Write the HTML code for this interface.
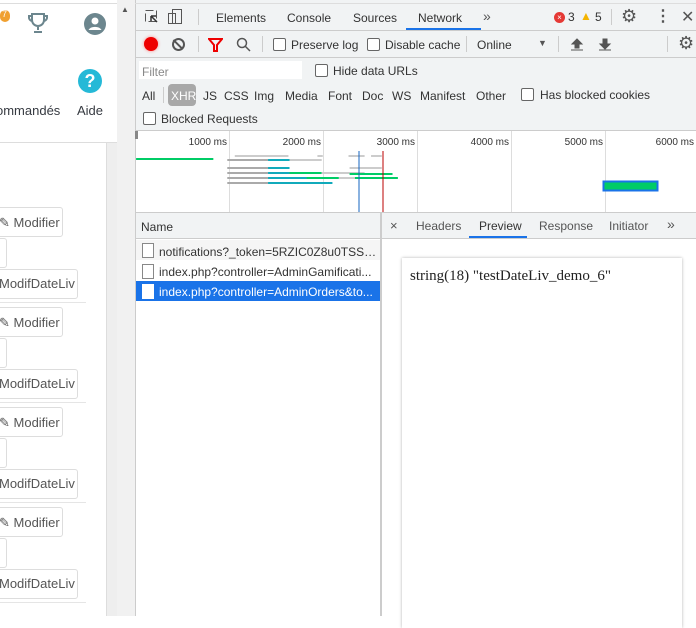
<!DOCTYPE html>
<html><head><style>
*{box-sizing:border-box;margin:0;padding:0}
body{width:696px;height:616px;overflow:hidden;position:relative;background:#fff;font-family:"Liberation Sans",sans-serif;font-size:12px;color:#333}
.a{position:absolute}
.t{position:absolute;white-space:nowrap}
.cb{position:absolute;width:13px;height:13px;border:1px solid #666;border-radius:2px;background:#fff}
.btn{position:absolute;border:1px solid #ddd;border-radius:3px;background:#fff;color:#555;font-size:13px}
.li{position:absolute;white-space:nowrap;overflow:hidden;text-overflow:ellipsis;width:218px}
</style></head><body>
<!-- left page -->
<div class="a" style="left:0;top:3px;width:117px;height:1px;background:#ddd"></div>
<div class="a" style="left:0;top:4px;width:117px;height:139px;background:#fff;border-bottom:1px solid #ddd"></div>
<div class="a" style="left:0;top:10px;width:10px;height:12px;border-radius:6px;background:#f0a030"></div>
<div class="t" style="left:2px;top:9px;font-size:9px;color:#fff">7</div>
<svg class="a" style="left:28px;top:12px" width="20" height="22" viewBox="0 0 20 22"><path d="M4 2h12v6a6 6 0 0 1-12 0z M4 4H1v2a4 4 0 0 0 3 3 M16 4h3v2a4 4 0 0 1-3 3 M10 14v4 M6 20h8" fill="none" stroke="#6c868e" stroke-width="2"/></svg>
<svg class="a" style="left:84px;top:13px" width="22" height="22" viewBox="0 0 22 22"><circle cx="11" cy="11" r="11" fill="#6c868e"/><circle cx="11" cy="8" r="3.5" fill="#fff"/><path d="M4.5 17a7 5 0 0 1 13 0" fill="#fff"/></svg>
<div class="a" style="left:78px;top:69px;width:24px;height:24px;border-radius:12px;background:#25b9d7;color:#fff;font-weight:bold;font-size:18px;text-align:center;line-height:24px">?</div>
<div class="t" style="left:-4px;top:103px;font-size:13px;color:#363a41">ommandés</div>
<div class="t" style="left:77px;top:103px;font-size:13px;color:#363a41">Aide</div>
<div class="a" style="left:106px;top:143px;width:1px;height:473px;background:#ddd"></div>
<div class="a" style="left:107px;top:143px;width:10px;height:473px;background:#eee"></div>
<div class="a" style="left:117px;top:0;width:18px;height:616px;background:#f1f1f1"></div>
<div class="t" style="left:121px;top:5px;font-size:8px;color:#555">▲</div>
<div id="rows"></div>
<!-- devtools -->
<div class="a" style="left:135px;top:0;width:561px;height:212px;background:#f1f3f4;border-left:1px solid #ccc"></div>
<div class="a" style="left:135px;top:3px;width:561px;height:1px;background:#ddd"></div>
<div class="a" style="left:135px;top:30px;width:561px;height:1px;background:#ccc"></div>
<div class="a" style="left:135px;top:57px;width:561px;height:1px;background:#ccc"></div>
<div class="a" style="left:135px;top:130px;width:561px;height:1px;background:#ccc"></div>
<svg class="a" style="left:144px;top:9px" width="40" height="17"><rect x="1.5" y="1.5" width="11" height="11" fill="none" stroke="#555" stroke-dasharray="8 3"/><path d="M7 7l6 6M7 7v5M7 7h5" stroke="#333" stroke-width="1.5"/><rect x="24.5" y="4.5" width="7" height="10" fill="none" stroke="#555"/><rect x="28.5" y="0.5" width="9" height="14" fill="none" stroke="#555"/></svg>
<div class="a" style="left:198px;top:9px;width:1px;height:16px;background:#ccc"></div>
<div class="t" style="left:216px;top:11px;color:#333">Elements</div>
<div class="t" style="left:287px;top:11px;color:#333">Console</div>
<div class="t" style="left:353px;top:11px;color:#333">Sources</div>
<div class="t" style="left:418px;top:11px;color:#333">Network</div>
<div class="a" style="left:406px;top:28px;width:75px;height:2px;background:#1a73e8"></div>
<div class="t" style="left:483px;top:8px;font-size:14px;color:#555">»</div>
<div class="a" style="left:554px;top:12px;width:11px;height:11px;border-radius:6px;background:#e53935;color:#fff;font-size:8px;text-align:center;line-height:11px">×</div>
<div class="t" style="left:568px;top:10px;color:#333">3</div>
<div class="t" style="left:580px;top:9px;color:#f4b400;font-size:12px">▲</div>
<div class="t" style="left:595px;top:10px;color:#333">5</div>
<div class="a" style="left:611px;top:9px;width:1px;height:16px;background:#ccc"></div>
<div class="t" style="left:621px;top:6px;font-size:18px;color:#555">⚙</div>
<div class="t" style="left:655px;top:6px;font-size:16px;color:#555;font-weight:bold">⋮</div>
<div class="t" style="left:681px;top:7px;font-size:16px;color:#555">✕</div>
<!-- row 2 -->
<div class="a" style="left:144px;top:37px;width:14px;height:14px;border-radius:7px;background:#e00;box-shadow:0 0 3px #f88"></div>
<div class="a" style="left:172px;top:38px;width:13px;height:13px;border-radius:7px;border:2px solid #555"></div>
<div class="a" style="left:177px;top:38px;width:2px;height:13px;background:#555;transform:rotate(-45deg)"></div>
<div class="a" style="left:198px;top:36px;width:1px;height:16px;background:#ccc"></div>
<svg class="a" style="left:208px;top:38px" width="15" height="14"><path d="M1 1h13l-5 6v6h-3v-6z" fill="none" stroke="#e00" stroke-width="2"/></svg>
<svg class="a" style="left:236px;top:37px" width="15" height="15"><circle cx="6" cy="6" r="4.5" fill="none" stroke="#555" stroke-width="1.5"/><path d="M9 9l5 5" stroke="#555" stroke-width="1.5"/></svg>
<div class="a" style="left:262px;top:36px;width:1px;height:16px;background:#ccc"></div>
<div class="cb" style="left:273px;top:38px"></div>
<div class="t" style="left:291px;top:38px">Preserve log</div>
<div class="cb" style="left:367px;top:38px"></div>
<div class="t" style="left:385px;top:38px">Disable cache</div>
<div class="a" style="left:466px;top:36px;width:1px;height:16px;background:#ccc"></div>
<div class="t" style="left:477px;top:38px">Online</div>
<div class="t" style="left:538px;top:38px;font-size:9px;color:#555">▼</div>
<div class="a" style="left:558px;top:36px;width:1px;height:16px;background:#ccc"></div>
<svg class="a" style="left:570px;top:38px" width="44" height="13"><path d="M2 6l5-5 5 5zM5 6h4v4h-4zM1 12h12" fill="#555" stroke="#555"/><path d="M30 6l5 5 5-5zM33 1h4v5h-4zM29 12h12" fill="#555" stroke="#555"/></svg>
<div class="a" style="left:667px;top:36px;width:1px;height:16px;background:#ccc"></div>
<div class="t" style="left:678px;top:33px;font-size:18px;color:#555">⚙</div>
<!-- filter -->
<div class="a" style="left:139px;top:61px;width:163px;height:18px;background:#fff"></div>
<div class="t" style="left:142px;top:65px;color:#888">Filter</div>
<div class="cb" style="left:315px;top:64px"></div>
<div class="t" style="left:333px;top:64px">Hide data URLs</div>
<div class="t" style="left:142px;top:89px">All</div>
<div class="a" style="left:163px;top:87px;width:1px;height:16px;background:#ccc"></div>
<div class="a" style="left:168px;top:84px;width:28px;height:22px;border-radius:4px;background:#a8a8a8"></div>
<div class="t" style="left:171px;top:89px;color:#fff">XHR</div>
<div class="t" style="left:203px;top:89px">JS</div>
<div class="t" style="left:224px;top:89px">CSS</div>
<div class="t" style="left:254px;top:89px">Img</div>
<div class="t" style="left:285px;top:89px">Media</div>
<div class="t" style="left:328px;top:89px">Font</div>
<div class="t" style="left:362px;top:89px">Doc</div>
<div class="t" style="left:392px;top:89px">WS</div>
<div class="t" style="left:420px;top:89px">Manifest</div>
<div class="t" style="left:476px;top:89px">Other</div>
<div class="cb" style="left:521px;top:88px"></div>
<div class="t" style="left:540px;top:88px">Has blocked cookies</div>
<div class="cb" style="left:143px;top:112px"></div>
<div class="t" style="left:161px;top:112px">Blocked Requests</div>
<!-- overview -->
<div class="a" style="left:135px;top:131px;width:561px;height:81px;background:#fff;border-left:1px solid #ccc"></div>
<div class="a" style="left:135px;top:131px;width:3px;height:8px;background:#888"></div>
<svg class="a" style="left:135px;top:131px" width="561" height="82">
<g stroke="#ddd"><path d="M94.5 0v81M188.5 0v81M282.5 0v81M376.5 0v81M470.5 0v81"/></g>
<g font-family="Liberation Sans" font-size="10" fill="#333" text-anchor="end"><text x="92" y="14">1000 ms</text><text x="186" y="14">2000 ms</text><text x="280" y="14">3000 ms</text><text x="374" y="14">4000 ms</text><text x="468" y="14">5000 ms</text><text x="559" y="14">6000 ms</text></g>
<g transform="scale(1.073,1)">
<path d="M1 28h72" stroke="#0c6" stroke-width="2"/><path d="M93 25h50M170 25h5M199 25h15M220 25h10" stroke="#ccc" stroke-width="2"/>
<g stroke-width="2"><path d="M86 29h38" stroke="#aaa"/><path d="M124 29h20" stroke="#1ab"/><path d="M144 29h30" stroke="#ccc"/>
<path d="M86 37h38M86 42h38M86 47h38M86 52h38" stroke="#aaa"/><path d="M124 37h20M124 42h20M124 47h50M124 52h60" stroke="#1ab"/><path d="M144 42h30M160 47h30" stroke="#0c6"/><path d="M174 42h40M190 47h50M200 37h30" stroke="#ccc"/><path d="M200 43h40M205 47h40" stroke="#0c6"/></g>
</g>
<path d="M224 20v61" stroke="#1565c0"/><path d="M248 20v61" stroke="#b00"/>
<rect x="468.5" y="50.5" width="54" height="9" fill="#0c6" stroke="#1a73e8" stroke-width="2"/>
</svg>
<!-- lower -->
<div class="a" style="left:135px;top:212px;width:561px;height:1px;background:#ccc"></div>
<div class="a" style="left:135px;top:213px;width:246px;height:26px;background:#f1f3f4;border-bottom:1px solid #ccc;border-left:1px solid #ccc"></div>
<div class="t" style="left:141px;top:220px">Name</div>
<div class="a" style="left:135px;top:239px;width:246px;height:377px;background:#fff;border-left:1px solid #ccc"></div>
<div class="a" style="left:136px;top:240px;width:244px;height:20px;background:#f5f5f5"></div>
<div class="a" style="left:136px;top:281px;width:244px;height:20px;background:#1a73e8"></div>
<div class="cb" style="left:142px;top:243px;border-color:#888;height:15px;width:12px;border-radius:0"></div>
<div class="cb" style="left:142px;top:264px;border-color:#888;height:15px;width:12px;border-radius:0"></div>
<div class="cb" style="left:142px;top:284px;border-color:#fff;height:15px;width:12px;border-radius:0"></div>
<div class="li" style="left:159px;top:245px">notifications?_token=5RZIC0Z8u0TSSef...</div>
<div class="li" style="left:159px;top:265px">index.php?controller=AdminGamificati...</div>
<div class="li" style="left:159px;top:285px;color:#fff">index.php?controller=AdminOrders&amp;to...</div>
<div class="a" style="left:380px;top:213px;width:2px;height:403px;background:#ccc"></div>
<div class="a" style="left:382px;top:213px;width:314px;height:26px;background:#f1f3f4;border-bottom:1px solid #ccc"></div>
<div class="t" style="left:390px;top:218px;font-size:13px;color:#555">×</div>
<div class="t" style="left:416px;top:219px;color:#555">Headers</div>
<div class="t" style="left:479px;top:219px;color:#333">Preview</div>
<div class="a" style="left:469px;top:236px;width:58px;height:2px;background:#1a73e8"></div>
<div class="t" style="left:539px;top:219px;color:#555">Response</div>
<div class="t" style="left:609px;top:219px;color:#555">Initiator</div>
<div class="t" style="left:667px;top:216px;font-size:14px;color:#555">»</div>
<div class="a" style="left:402px;top:258px;width:280px;height:370px;background:#fff;box-shadow:0 0 3px rgba(0,0,0,.3)"></div>
<div class="t" style="left:410px;top:268px;font-family:'Liberation Serif',serif;font-size:15px;color:#222">string(18) "testDateLiv_demo_6"</div>
<script>
var h='';[0,100,200,300].forEach(function(o){
h+='<div class="btn" style="left:-10px;top:'+(207+o)+'px;width:73px;height:30px;padding:7px 0 0 8px">✎ Modifier</div>';
h+='<div class="btn" style="left:-10px;top:'+(238+o)+'px;width:17px;height:30px"></div>';
h+='<div class="btn" style="left:-10px;top:'+(269+o)+'px;width:88px;height:30px;padding:6px 0 0 8px">ModifDateLiv</div>';
h+='<div class="a" style="left:0;top:'+(302+o)+'px;width:86px;height:1px;background:#e5e5e5"></div>';});
document.getElementById('rows').innerHTML=h;
</script>
</body></html>
